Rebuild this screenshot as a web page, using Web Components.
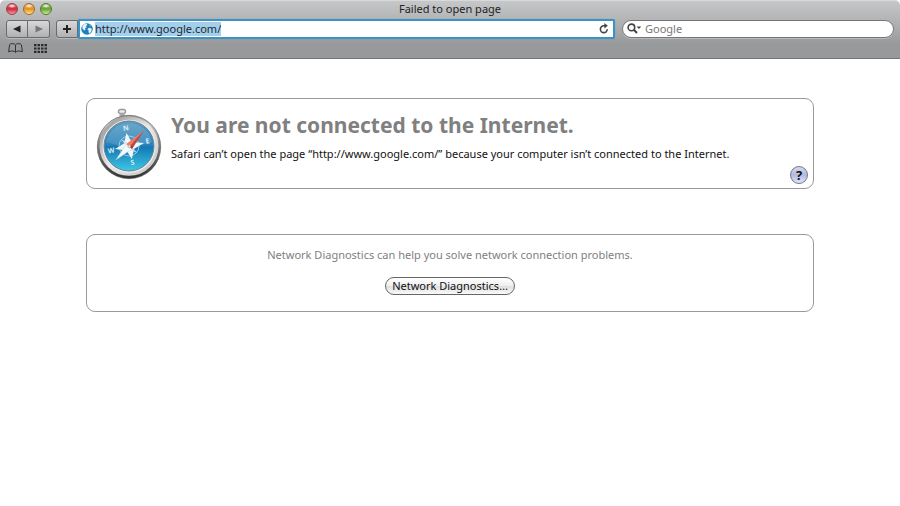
<!DOCTYPE html>
<html lang="en">
<head>
<meta charset="utf-8">
<title>Failed to open page</title>
<style>
    body {
        margin: 0;
        background: #fff;
        font-family: "Noto Sans", "Open Sans", sans-serif;
        font-size: 11px;
        color: #111;
    }
</style>
</head>
<body>
<browser-window page-title="Failed to open page">
    <nav-buttons slot="tools"></nav-buttons>
    <address-bar slot="tools" value="http://www.google.com/"></address-bar>
    <search-field slot="tools" placeholder="Google"></search-field>
    <bookmarks-bar slot="bookmarks"></bookmarks-bar>
    <message-panel>
        <compass-icon slot="icon"></compass-icon>
        <span slot="heading">You are not connected to the Internet.</span>
        Safari can’t open the page “http://www.google.com/” because your computer isn’t connected to the Internet.
    </message-panel>
    <diagnostics-panel>
        Network Diagnostics can help you solve network connection problems.
        <span slot="action">Network Diagnostics…</span>
    </diagnostics-panel>
</browser-window>

<script>
class BrowserWindow extends HTMLElement {
    constructor() {
        super();
        this.attachShadow({ mode: 'open' });
        this.shadowRoot.innerHTML = `
            <style>
                :host { display: block; }
                header {
                    box-sizing: border-box;
                    height: 59px;
                    border-top: 1px solid #d8d9da;
                    border-bottom: 1px solid #737476;
                    border-radius: 5px 5px 0 0;
                    background: linear-gradient(#c6c7c8, #a9aaac 50%, #98999b 75%, #98999b);
                }
                .title {
                    display: grid;
                    grid-template-columns: 1fr auto 1fr;
                    align-items: center;
                    height: 16px;
                    padding: 0 6px;
                }
                .lights { display: flex; gap: 5px; }
                .lights button {
                    width: 12px;
                    height: 12px;
                    padding: 0;
                    border: 1px solid #7d5a55;
                    border-radius: 50%;
                }
                .lights .close {
                    border-color: #96404a;
                    background: radial-gradient(ellipse 4px 2px at 50% 20%, #fff, #fff0), linear-gradient(#e0707a, #d02a40 50%, #f79a9c);
                }
                .lights .min {
                    border-color: #9c6a35;
                    background: radial-gradient(ellipse 4px 2px at 50% 20%, #fff, #fff0), linear-gradient(#ecac62, #ea8f20 50%, #ffe682);
                }
                .lights .max {
                    border-color: #56763c;
                    background: radial-gradient(ellipse 4px 2px at 50% 20%, #fff, #fff0), linear-gradient(#98bf72, #66a338 50%, #cdf288);
                }
                h1 {
                    margin: 0;
                    font-size: 11px;
                    line-height: 16px;
                    font-weight: 400;
                    color: #222;
                }
                .tools {
                    display: flex;
                    align-items: center;
                    height: 23px;
                    padding: 0 6px;
                }
                main {
                    display: grid;
                    gap: 45px;
                    max-width: 728px;
                    margin: 39px auto;
                    padding: 0 80px;
                }
            </style>
            <header>
                <div class="title">
                    <div class="lights">
                        <button class="close" aria-label="Close"></button>
                        <button class="min" aria-label="Minimize"></button>
                        <button class="max" aria-label="Zoom"></button>
                    </div>
                    <h1></h1>
                </div>
                <div class="tools"><slot name="tools"></slot></div>
                <slot name="bookmarks"></slot>
            </header>
            <main><slot></slot></main>
        `;
    }

    connectedCallback() {
        this.shadowRoot.querySelector('h1').textContent = this.getAttribute('page-title');
    }
}

class NavButtons extends HTMLElement {
    constructor() {
        super();
        this.attachShadow({ mode: 'open' });
        this.shadowRoot.innerHTML = `
            <style>
                :host { display: flex; gap: 6px; }
                .pair { display: flex; }
                button {
                    display: grid;
                    place-items: center;
                    box-sizing: border-box;
                    width: 22px;
                    height: 18px;
                    padding: 0;
                    border: 1px solid #696a6c;
                    border-radius: 3px;
                    background: linear-gradient(#d8d8d9, #b0b1b3);
                    box-shadow: 0 1px 0 #b9babb;
                }
                .pair button:first-child { border-radius: 3px 0 0 3px; }
                .pair button:last-child { border-left: 0; border-radius: 0 3px 3px 0; }
                .add { border-radius: 3px 0 0 3px; }
            </style>
            <div class="pair">
                <button aria-label="Back">
                    <svg width="8" height="8"><path d="M0 4 L7.5 .5 V7.5Z" fill="#222"/></svg>
                </button>
                <button aria-label="Forward">
                    <svg width="8" height="8"><path d="M8 4 L.5 .5 V7.5Z" fill="#777"/></svg>
                </button>
            </div>
            <button class="add" aria-label="Add bookmark">
                <svg width="8" height="8"><path d="M4 0V8M0 4H8" stroke="#222" stroke-width="2"/></svg>
            </button>
        `;
    }
}

class AddressBar extends HTMLElement {
    constructor() {
        super();
        this.attachShadow({ mode: 'open' });
        this.shadowRoot.innerHTML = `
            <style>
                :host { display: block; flex: 537; min-width: 0; }
                form {
                    display: flex;
                    align-items: center;
                    gap: 2px;
                    box-sizing: border-box;
                    height: 20px;
                    margin: 0;
                    padding: 0 4px 0 1px;
                    border: 2px solid #3c91c5;
                    border-radius: 2px;
                    background: #fff;
                    box-shadow: 0 0 1px #4a9bcc;
                }
                svg { display: block; flex: none; }
                .field { flex: 1; min-width: 0; display: flex; }
                input {
                    field-sizing: content;
                    max-width: 100%;
                    height: 14px;
                    padding: 0;
                    border: 0;
                    outline: 0;
                    background: #a3cfea;
                    font: inherit;
                    line-height: 14px;
                    color: #1b2a35;
                }
                button { padding: 0; border: 0; background: none; }
            </style>
            <form>
                <svg width="12" height="12" viewBox="0 0 12 12">
                    <circle cx="6" cy="6" r="5.8" fill="#1d7fc0"/>
                    <path d="M1.4 3 Q3 .8 5.4 .8 L6.4 2 L5 3 L5.6 4.4 L4 5 L4.6 6.6 L3.2 7.4 L1.4 5.4Z" fill="#e4f4fc"/>
                    <path d="M6.8 5.6 L8.6 4.8 L10.8 5.8 L10.4 8.4 L8.4 10.6 L7.4 9 L7.8 7.6 L6.6 6.8Z" fill="#e4f4fc"/>
                    <path d="M8 1.4 L10.2 3 L9 3.6Z" fill="#8cc9ec"/>
                </svg>
                <div class="field"><input type="text" aria-label="Address"></div>
                <button type="button" aria-label="Reload">
                    <svg width="10" height="11" viewBox="0 0 10 11">
                        <path d="M6 2.8H4.8A3.4 3.4 0 1 0 8.2 6.2" fill="none" stroke="#444" stroke-width="1.6"/>
                        <path d="M5.4 0 L8.8 2.8 L5.4 5.6Z" fill="#444"/>
                    </svg>
                </button>
            </form>
        `;
    }

    connectedCallback() {
        this.shadowRoot.querySelector('input').value = this.getAttribute('value');
    }
}

class SearchField extends HTMLElement {
    constructor() {
        super();
        this.attachShadow({ mode: 'open' });
        this.shadowRoot.innerHTML = `
            <style>
                :host { display: block; flex: 272; min-width: 0; margin-left: 7px; }
                label {
                    display: flex;
                    align-items: center;
                    gap: 3px;
                    box-sizing: border-box;
                    height: 18px;
                    padding: 0 8px 0 4px;
                    border: 1px solid #747577;
                    border-radius: 9px;
                    background: #fff;
                    box-shadow: 0 1px 0 #b9babb;
                }
                svg { flex: none; }
                input {
                    flex: 1;
                    min-width: 0;
                    height: 15px;
                    padding: 0;
                    border: 0;
                    outline: 0;
                    background: none;
                    font: inherit;
                }
                input::placeholder { color: #777; opacity: 1; }
            </style>
            <label>
                <svg width="15" height="11" viewBox="0 0 15 11">
                    <circle cx="4.4" cy="4.4" r="3.3" fill="none" stroke="#444" stroke-width="1.6"/>
                    <path d="M6.8 6.8 L10 10" stroke="#444" stroke-width="2"/>
                    <path d="M9.6 3.4 H14.2 L11.9 6Z" fill="#444"/>
                </svg>
                <input type="text" aria-label="Search">
            </label>
        `;
    }

    connectedCallback() {
        this.shadowRoot.querySelector('input').placeholder = this.getAttribute('placeholder');
    }
}

class BookmarksBar extends HTMLElement {
    constructor() {
        super();
        this.attachShadow({ mode: 'open' });
        this.shadowRoot.innerHTML = `
            <style>
                :host { display: flex; align-items: center; gap: 11px; height: 16px; padding: 0 8px; }
                button { padding: 0; border: 0; background: none; }
                svg { display: block; }
            </style>
            <button aria-label="Bookmarks">
                <svg width="15" height="10" viewBox="0 0 15 10" fill="none" stroke="#333" stroke-width="1">
                    <path d="M7.5 2 Q6.8 .6 4.5 .6 Q2.2 .6 1.6 1.8 L.6 8.8 Q2 8 4.2 8 Q6.6 8 7.5 9.3 Q8.4 8 10.8 8 Q13 8 14.4 8.8 L13.4 1.8 Q12.8 .6 10.5 .6 Q8.2 .6 7.5 2 V9"/>
                </svg>
            </button>
            <button aria-label="Top Sites">
                <svg width="13" height="9" viewBox="0 0 13 9" stroke="#2c2c2c" stroke-width="2.2" stroke-dasharray="2.5 1">
                    <path d="M0 1.1H13M0 4.5H13M0 7.9H13"/>
                </svg>
            </button>
        `;
    }
}

class CompassIcon extends HTMLElement {
    constructor() {
        super();
        this.attachShadow({ mode: 'open' });
        this.shadowRoot.innerHTML = `
            <style>
                :host { display: block; }
                svg { display: block; }
                text { font: 700 7px "Noto Sans", sans-serif; fill: #d4ecf7; text-anchor: middle; }
            </style>
            <svg width="66" height="72" viewBox="0 0 66 72" role="img" aria-label="Safari">
                <defs>
                    <linearGradient id="rim" x2="0" y2="1">
                        <stop offset="0" stop-color="#999"/>
                        <stop offset=".15" stop-color="#c4c4c4"/>
                        <stop offset=".5" stop-color="#777"/>
                        <stop offset="1" stop-color="#303030"/>
                    </linearGradient>
                    <linearGradient id="ring" x2="1" y2="1">
                        <stop offset="0" stop-color="#8c8c8c"/>
                        <stop offset=".5" stop-color="#e8e8e8"/>
                        <stop offset="1" stop-color="#c4c4c4"/>
                    </linearGradient>
                    <linearGradient id="face" x2="0" y2="1">
                        <stop offset="0" stop-color="#5a9cc3"/>
                        <stop offset=".48" stop-color="#2883bb"/>
                        <stop offset=".52" stop-color="#1478b4"/>
                        <stop offset="1" stop-color="#3ec8e6"/>
                    </linearGradient>
                </defs>
                <rect x="22.5" y="1.5" width="7" height="4" rx="2" fill="#eee" stroke="#999" stroke-width="1.4"/>
                <path d="M23.5 5.5h5v3h-5z" fill="#aaa"/>
                <circle cx="33" cy="39" r="31.7" fill="url(#rim)" stroke="#555" stroke-width=".6"/>
                <circle cx="33" cy="38.3" r="28" fill="#eee" stroke="url(#ring)" stroke-width="3"/>
                <circle cx="33" cy="38" r="25" fill="url(#face)" stroke="#6a8494" stroke-width="1"/>
                <circle cx="33" cy="38" r="10" fill="none" stroke="#8ec8e4" stroke-width="1"/>
                <path d="M30.5 25 L35.6 34 L48 35 L38.2 40.8 L35.8 51 L30.6 42.4 L19 41 L28 35.6Z" fill="#eef8fc"/>
                <path d="M25 31 L30.6 34.6 L29 36.2Z M41 45 L35 42 L37 40Z" fill="#bfe2f1"/>
                <text transform="translate(30.2 22.5) rotate(-10)">N</text>
                <text transform="translate(52 35.5) rotate(-10)">E</text>
                <text transform="translate(37 57) rotate(-10)">S</text>
                <text transform="translate(15.5 45) rotate(-10)">W</text>
                <path d="M19.8 52 L30.2 36 L36 41Z" fill="#f7fafb" stroke="#a9c4d0" stroke-width=".4"/>
                <path d="M48.5 22 L30.2 36 L33 38.5Z" fill="#f0684e"/>
                <path d="M48.5 22 L33 38.5 L36 41Z" fill="#c02f1e"/>
                <circle cx="33.2" cy="38.4" r="1.4" fill="#ddd" stroke="#999" stroke-width=".5"/>
                <path d="M10 34 A23.5 23.5 0 0 1 56 34 Q33 42 10 34Z" fill="#fff" opacity=".12"/>
            </svg>
        `;
    }
}

class MessagePanel extends HTMLElement {
    constructor() {
        super();
        this.attachShadow({ mode: 'open' });
        this.shadowRoot.innerHTML = `
            <style>
                :host {
                    display: grid;
                    grid-template-columns: auto 1fr auto;
                    gap: 9px;
                    box-sizing: border-box;
                    min-height: 91px;
                    padding: 9px 5px 4px 9px;
                    border: 1px solid #999;
                    border-radius: 9px;
                }
                h2 {
                    margin: 2px 0 6px;
                    font-size: 21px;
                    line-height: 30px;
                    font-weight: 700;
                    color: #808080;
                }
                p { margin: 0; font-size: 11px; line-height: 16px; }
                button {
                    align-self: end;
                    width: 18px;
                    height: 18px;
                    padding: 0;
                    border: 1px solid #77778c;
                    border-radius: 50%;
                    background: linear-gradient(#d6d8ec, #b3b9df 50%, #e2e6fb);
                    font: 700 13px/16px "Noto Sans", sans-serif;
                    color: #111;
                }
            </style>
            <slot name="icon"></slot>
            <div>
                <h2><slot name="heading"></slot></h2>
                <p><slot></slot></p>
            </div>
            <button aria-label="Help">?</button>
        `;
    }
}

class DiagnosticsPanel extends HTMLElement {
    constructor() {
        super();
        this.attachShadow({ mode: 'open' });
        this.shadowRoot.innerHTML = `
            <style>
                :host {
                    display: grid;
                    justify-items: center;
                    gap: 14px;
                    box-sizing: border-box;
                    padding: 12px 8px 16px;
                    border: 1px solid #999;
                    border-radius: 9px;
                }
                p { margin: 0; line-height: 16px; color: #808080; }
                button {
                    height: 18px;
                    padding: 0 6px;
                    border: 1px solid #666;
                    border-radius: 9px;
                    background: linear-gradient(#fff, #eee 50%, #dedede 50%, #fafafa);
                    font: inherit;
                    line-height: 16px;
                    color: #111;
                }
            </style>
            <p><slot></slot></p>
            <button><slot name="action"></slot></button>
        `;
    }
}

customElements.define('browser-window', BrowserWindow);
customElements.define('nav-buttons', NavButtons);
customElements.define('address-bar', AddressBar);
customElements.define('search-field', SearchField);
customElements.define('bookmarks-bar', BookmarksBar);
customElements.define('compass-icon', CompassIcon);
customElements.define('message-panel', MessagePanel);
customElements.define('diagnostics-panel', DiagnosticsPanel);
</script>
</body>
</html>
